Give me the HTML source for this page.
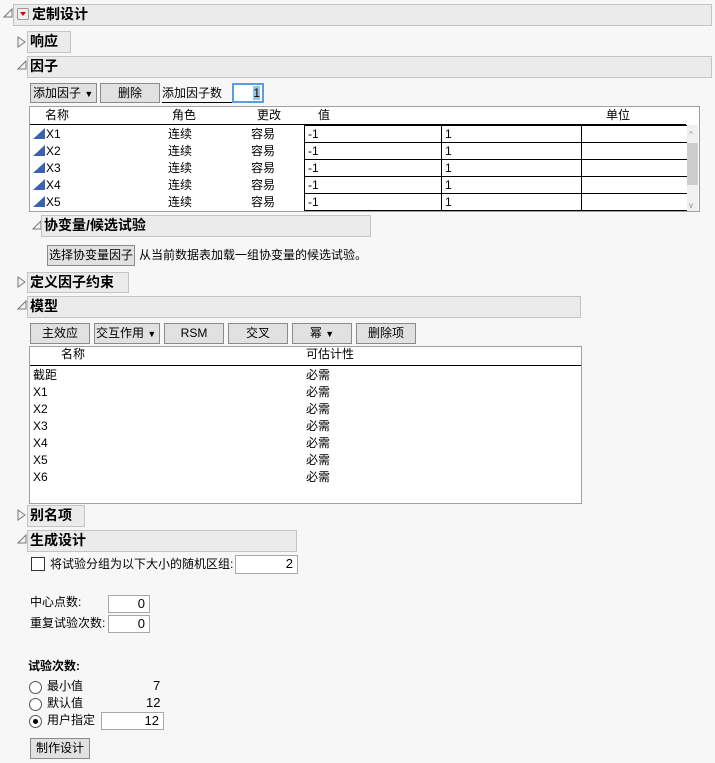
<!DOCTYPE html>
<html><head><meta charset="utf-8"><style>
body{margin:0;width:715px;height:763px;background:#f7f7f7;font-family:"Liberation Sans","Noto Sans CJK SC",sans-serif;font-size:12px;color:#000;position:relative;overflow:hidden}
.a{position:absolute;white-space:nowrap;line-height:15px}
.bar{position:absolute;background:#ebebeb;border:1px solid #c4c4c4;box-sizing:border-box;font-weight:bold;font-size:14px;line-height:19px;padding-left:2px}
.btn{position:absolute;background:#e1e1e1;border:1px solid #8a8a8a;box-sizing:border-box;text-align:center;line-height:18px;font-size:12px}
.inp{position:absolute;background:#fff;border:1px solid #a8a8a8;box-sizing:border-box;text-align:right;padding-right:4px;line-height:16px}
.cell{position:absolute;border:1px solid #000;box-sizing:border-box;background:#fff;height:18px;line-height:16px;padding-left:3px}
</style></head><body>
<svg class="a" style="left:3px;top:8px" width="10" height="10"><path d="M1 9 L9 9 L9 1 Z" fill="none" stroke="#777"/></svg>
<div class="bar" style="left:13px;top:4px;width:699px;height:22px;padding-left:18px">定制设计</div>
<div class="a" style="left:17px;top:8px;width:12px;height:12px;border:1px solid #999;border-radius:2px;background:#f0f0f0;box-sizing:border-box"><svg width="10" height="10" style="position:absolute;left:0;top:0"><path d="M2 3 L8 3 L5 7 Z" fill="#d00"/></svg></div>

<svg class="a" style="left:17px;top:36px" width="10" height="12"><path d="M1 1 L8 6 L1 11 Z" fill="none" stroke="#777"/></svg>
<div class="bar" style="left:27px;top:31px;width:44px;height:22px">响应</div>

<svg class="a" style="left:17px;top:60px" width="10" height="10"><path d="M1 9 L9 9 L9 1 Z" fill="none" stroke="#777"/></svg>
<div class="bar" style="left:27px;top:56px;width:685px;height:22px">因子</div>

<div class="btn" style="left:30px;top:83px;width:67px;height:20px;text-align:left;padding-left:2px">添加因子 <span style="font-size:9px">▼</span></div>
<div class="btn" style="left:100px;top:83px;width:60px;height:20px">删除</div>
<div class="a" style="left:162px;top:84px;width:70px;height:18px;border-bottom:1px solid #000;line-height:18px">添加因子数</div>
<div class="a" style="left:232px;top:83px;width:32px;height:20px;border:2px solid #5a9ee0;box-sizing:border-box;background:#fff;text-align:right;line-height:16px;padding-right:2px"><span style="background:#99c4ea">1</span></div>

<div class="a" style="left:29px;top:106px;width:671px;height:106px;border:1px solid #a0a0a0;background:#fff;box-sizing:border-box"></div>
<div class="a" style="left:45px;top:108px">名称</div>
<div class="a" style="left:172px;top:108px">角色</div>
<div class="a" style="left:257px;top:108px">更改</div>
<div class="a" style="left:318px;top:108px">值</div>
<div class="a" style="left:606px;top:108px">单位</div>
<div class="a" style="left:30px;top:124px;width:656px;height:1px;background:#000"></div>
<div class="a" style="left:687px;top:125px;width:11px;height:86px;background:#f0f0f0"></div>
<div class="a" style="left:687px;top:143px;width:11px;height:42px;background:#cdcdcd"></div>
<div class="a" style="left:689px;top:127px;font-size:8px;color:#888">^</div>
<div class="a" style="left:689px;top:198px;font-size:8px;color:#888">v</div>

<div id="rows"></div>

<svg class="a" style="left:32px;top:220px" width="10" height="10"><path d="M1 9 L9 9 L9 1 Z" fill="none" stroke="#777"/></svg>
<div class="bar" style="left:41px;top:215px;width:330px;height:22px">协变量/候选试验</div>
<div class="btn" style="left:47px;top:245px;width:88px;height:21px;line-height:19px">选择协变量因子</div>
<div class="a" style="left:139px;top:248px">从当前数据表加载一组协变量的候选试验。</div>

<svg class="a" style="left:17px;top:276px" width="10" height="12"><path d="M1 1 L8 6 L1 11 Z" fill="none" stroke="#777"/></svg>
<div class="bar" style="left:27px;top:272px;width:102px;height:21px">定义因子约束</div>

<svg class="a" style="left:17px;top:300px" width="10" height="10"><path d="M1 9 L9 9 L9 1 Z" fill="none" stroke="#777"/></svg>
<div class="bar" style="left:27px;top:296px;width:554px;height:22px">模型</div>

<div class="btn" style="left:30px;top:323px;width:60px;height:21px">主效应</div>
<div class="btn" style="left:94px;top:323px;width:66px;height:21px;text-align:left;padding-left:1px">交互作用 <span style="font-size:9px">▼</span></div>
<div class="btn" style="left:164px;top:323px;width:60px;height:21px">RSM</div>
<div class="btn" style="left:228px;top:323px;width:60px;height:21px">交叉</div>
<div class="btn" style="left:292px;top:323px;width:60px;height:21px">幂 <span style="font-size:9px">▼</span></div>
<div class="btn" style="left:356px;top:323px;width:60px;height:21px">删除项</div>

<div class="a" style="left:29px;top:346px;width:553px;height:158px;border:1px solid #a0a0a0;background:#fff;box-sizing:border-box"></div>
<div class="a" style="left:61px;top:347px">名称</div>
<div class="a" style="left:306px;top:347px">可估计性</div>
<div class="a" style="left:30px;top:365px;width:551px;height:1px;background:#000"></div>
<div id="mrows"></div>

<svg class="a" style="left:17px;top:509px" width="10" height="12"><path d="M1 1 L8 6 L1 11 Z" fill="none" stroke="#777"/></svg>
<div class="bar" style="left:27px;top:505px;width:58px;height:22px">别名项</div>

<svg class="a" style="left:17px;top:534px" width="10" height="10"><path d="M1 9 L9 9 L9 1 Z" fill="none" stroke="#777"/></svg>
<div class="bar" style="left:27px;top:530px;width:270px;height:22px">生成设计</div>

<div class="a" style="left:31px;top:557px;width:14px;height:14px;border:1px solid #333;background:#fff;box-sizing:border-box"></div>
<div class="a" style="left:50px;top:557px;font-size:12px">将试验分组为以下大小的随机区组:</div>
<div class="inp" style="left:235px;top:555px;width:63px;height:19px;font-size:13px">2</div>

<div class="a" style="left:30px;top:595px">中心点数:</div>
<div class="inp" style="left:108px;top:595px;width:42px;height:18px;font-size:13px">0</div>
<div class="a" style="left:30px;top:616px">重复试验次数:</div>
<div class="inp" style="left:108px;top:615px;width:42px;height:18px;font-size:13px">0</div>

<div class="a" style="left:28px;top:659px;font-weight:bold">试验次数:</div>
<div class="a" style="left:29px;top:681px;width:13px;height:13px;border:1px solid #555;border-radius:50%;background:#fff;box-sizing:border-box"></div>
<div class="a" style="left:47px;top:679px;font-size:12px">最小值</div>
<div class="a" style="left:153px;top:678px;font-size:13px">7</div>
<div class="a" style="left:29px;top:698px;width:13px;height:13px;border:1px solid #555;border-radius:50%;background:#fff;box-sizing:border-box"></div>
<div class="a" style="left:47px;top:696px;font-size:12px">默认值</div>
<div class="a" style="left:146px;top:695px;font-size:13px">12</div>
<div class="a" style="left:29px;top:715px;width:13px;height:13px;border:1px solid #555;border-radius:50%;background:#fff;box-sizing:border-box"><div style="position:absolute;left:3px;top:3px;width:5px;height:5px;border-radius:50%;background:#000"></div></div>
<div class="a" style="left:47px;top:713px;font-size:12px">用户指定</div>
<div class="inp" style="left:101px;top:712px;width:63px;height:18px;font-size:13px">12</div>

<div class="btn" style="left:30px;top:738px;width:60px;height:21px;line-height:19px">制作设计</div>

<script>
var h='';
for(var i=0;i<5;i++){var y=125+i*17;
h+='<svg class="a" style="left:33px;top:'+(y+3)+'px" width="12" height="11"><path d="M0 11 L12 11 L12 0 Z" fill="#3a62b0"/></svg>';
h+='<div class="a" style="left:46px;top:'+(y+2)+'px">X'+(i+1)+'</div>';
h+='<div class="a" style="left:168px;top:'+(y+2)+'px">连续</div>';
h+='<div class="a" style="left:251px;top:'+(y+2)+'px">容易</div>';
h+='<div class="cell" style="left:304px;top:'+y+'px;width:138px">-1</div>';
h+='<div class="cell" style="left:441px;top:'+y+'px;width:141px">1</div>';
h+='<div class="cell" style="left:581px;top:'+y+'px;width:106px;border-right:none"></div>';}
document.getElementById('rows').outerHTML=h;
var m=['截距','X1','X2','X3','X4','X5','X6'],g='';
for(var j=0;j<7;j++){var yy=368+j*17;
g+='<div class="a" style="left:33px;top:'+yy+'px">'+m[j]+'</div><div class="a" style="left:306px;top:'+yy+'px">必需</div>';}
document.getElementById('mrows').outerHTML=g;
</script>
</body></html>
